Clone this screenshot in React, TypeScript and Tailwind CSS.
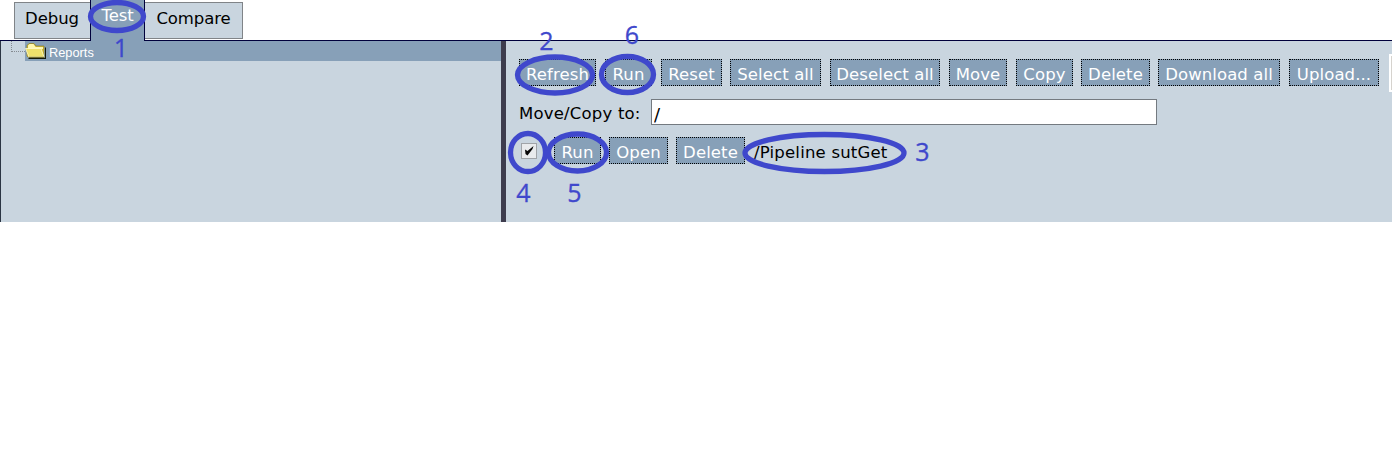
import React from "react";

const toolbar = [
  { label: "Refresh", size: "w-[77px] mr-[9px]" },
  { label: "Run", size: "w-[47px] mr-[9px]" },
  { label: "Reset", size: "w-[61px] mr-[8px]" },
  { label: "Select all", size: "w-[91px] mr-[9px]" },
  { label: "Deselect all", size: "w-[110px] mr-[9px]" },
  { label: "Move", size: "w-[58px] mr-[9px]" },
  { label: "Copy", size: "w-[57px] mr-[8px]" },
  { label: "Delete", size: "w-[69px] mr-[8px]" },
  { label: "Download all", size: "w-[122px] mr-[9px]" },
  { label: "Upload...", size: "w-[90px] mr-[10px]" },
];

const marks = [
  { n: "1", cx: 117, cy: 16.5, rx: 26.5, ry: 14, x: 121, y: 57 },
  { n: "2", cx: 555, cy: 75, rx: 37.5, ry: 18, x: 546.5, y: 50 },
  { n: "6", cx: 627.5, cy: 74.5, rx: 26, ry: 18, x: 632, y: 44 },
  { n: "3", cx: 824.5, cy: 153, rx: 79.5, ry: 18.5, x: 922.5, y: 161 },
  { n: "4", cx: 528, cy: 152.5, rx: 17.5, ry: 19, x: 523.5, y: 202 },
  { n: "5", cx: 577.5, cy: 152.5, rx: 29, ry: 18.5, x: 574.5, y: 202 },
];

function Button({ label, size }: { label: string; size: string }) {
  return (
    <button
      className={`flex h-[27px] shrink-0 items-center justify-center border border-dotted border-black bg-[#87a0b8] pt-[5px] leading-none whitespace-nowrap text-white ${size}`}
    >
      {label}
    </button>
  );
}

function Folder() {
  return (
    <svg width="22" height="18" viewBox="0 0 22 18" className="shrink-0">
      <path d="M3 16h17V5l1 1v11H4z" fill="#15180a" />
      <path d="M2 14V3.500L4 1.500h5L11 4h8v11H3z" fill="#d4bd3b" stroke="#8c7c20" strokeWidth=".7" />
      <path d="M3 3.500 4.500 2H8.500L10.500 5h7.500v2H3z" fill="#fff8b0" />
      <path d="M.5 6.500h15.500L19 15H4z" fill="#eee06c" stroke="#fffbd0" strokeWidth=".8" />
      <path d="M4 15.300h15.500" stroke="#5d5414" />
    </svg>
  );
}

export default function App() {
  return (
    <div className="relative h-[466px] w-[1392px] overflow-hidden bg-white font-['DejaVu_Sans',Verdana,sans-serif] text-[16.5px] tracking-[0.1px] text-black">
      <nav className="flex h-[41px] border-b border-[#00003c] pl-[14px] tracking-[-0.1px]">
        <div className="mt-[2px] flex h-[37px] w-[76px] items-center justify-center border border-r-0 border-[#808488] bg-[#c9d5df] pr-[1px] pb-[3px]">Debug</div>
        <div className="flex h-[41px] w-[55px] shrink-0 justify-center border-x border-[#00003c] bg-[#87a0b8] pt-[4px] leading-[24px] text-white">Test</div>
        <div className="mt-[2px] flex h-[37px] w-[98px] items-center justify-center border border-l-0 border-[#808488] bg-[#c9d5df] pb-[3px]">Compare</div>
      </nav>
      <div className="flex h-[181px] bg-[#c9d5df]">
        <aside className="w-[501px] shrink-0 border-l border-[#2b3543]">
          <div className="flex h-[20px]">
            <div className="ml-[10px] h-[11px] w-[14px] shrink-0 border-b border-l border-dotted border-[#858b91]" />
            <div className="flex flex-1 items-center bg-[#87a0b8] font-['Liberation_Sans',Arial,sans-serif] text-[12.8px] tracking-normal text-white">
              <Folder />
              <span className="ml-[2px] pt-[3px] leading-[17px]">Reports</span>
            </div>
          </div>
        </aside>
        <div className="w-[5px] shrink-0 bg-[#3d3c4d]" />
        <main className="min-w-0 flex-1 overflow-hidden pl-[13px]">
          <div className="flex h-[58px] items-center pt-[5px]">
            {toolbar.map((b) => (
              <Button key={b.label} label={b.label} size={b.size} />
            ))}
            <div className="h-[38px] w-[20px] shrink-0 border-2 border-white bg-[#d6d3ce]" />
          </div>
          <div className="flex h-[26px] items-center">
            <label className="w-[132px] shrink-0 pt-[5px] tracking-[0.2px] whitespace-nowrap">Move/Copy to:</label>
            <input
              defaultValue="/"
              className="h-[26px] w-[506px] border border-[#747a80] bg-white px-[2px] pt-[5px] text-[18px] outline-none"
            />
          </div>
          <div className="mt-[12px] flex h-[27px] items-center">
            <div className="mr-[17px] ml-[2px] flex h-[16px] w-[16px] items-center justify-center border border-[#a0a4a8] bg-[#e9ebed]">
              <svg width="12" height="12" viewBox="0 0 12 12">
                <path d="M2 4.500 4.500 6 10.500 1 9.500 4 4.500 10.500 2.500 9z" fill="#080808" />
              </svg>
            </div>
            <Button label="Run" size="w-[47px] mr-[8px]" />
            <Button label="Open" size="w-[59px] mr-[8px]" />
            <Button label="Delete" size="w-[69px] mr-[9px]" />
            <span className="pt-[5px] tracking-[0.2px]">/Pipeline sutGet</span>
          </div>
        </main>
      </div>
      <svg width="1392" height="222" viewBox="0 0 1392 222" className="pointer-events-none absolute top-0 left-0">
        {marks.map((m) => (
          <g key={m.n}>
            <ellipse cx={m.cx} cy={m.cy} rx={m.rx} ry={m.ry} fill="none" stroke="#3f48cc" strokeWidth="5.300" />
            <text x={m.x} y={m.y} textAnchor="middle" fill="#3f48cc" stroke="#3f48cc" strokeWidth=".3" className="font-['Open_Sans',sans-serif] text-[25px] tracking-normal">
              {m.n}
            </text>
          </g>
        ))}
      </svg>
    </div>
  );
}
